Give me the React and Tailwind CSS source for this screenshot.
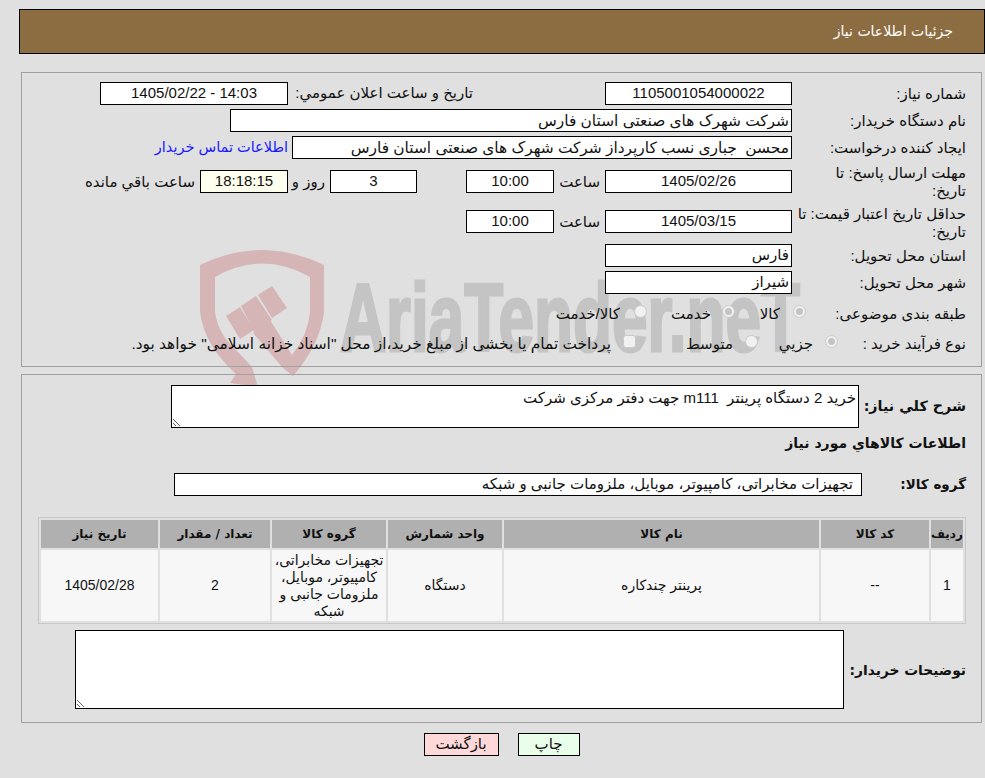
const FONT = "font-['Liberation_Sans','DejaVu_Sans',sans-serif]";

function Box({ className = "", children }) {
  return (
    <div className={`flex h-[23px] shrink-0 items-center border border-black bg-white whitespace-pre ${className}`}>
      {children}
    </div>
  );
}

function Label({ children, className = "w-[174px]" }) {
  return <div className={`shrink-0 leading-[18px] ${className}`}>{children}</div>;
}

function Radio({ checked, square }) {
  return (
    <span className={`-mt-[6px] flex h-[13px] w-[13px] shrink-0 items-center justify-center border border-[#cacaca] bg-[#f1f1f1] ${square ? "rounded-[3px]" : "rounded-full"}`}>
      {checked && <span className="h-[7px] w-[7px] rounded-full bg-[#c4c4c4]" />}
    </span>
  );
}

function Watermark() {
  return (
    <svg dir="ltr" className="pointer-events-none absolute left-[190px] top-[240px]" width="620" height="146" viewBox="190 240 620 146">
      <path
        d="M200 265 Q262 235 324 265 L324 312 Q320 345 293 376 L283 368 L253 333 L270 320 L292 355 Q308 335 310 312 L310 277 Q262 250 215 277 L215 312 Q218 335 238 352 L252 367 L258 387 L230 383 L236 374 Q204 345 200 312 Z"
        fill="#d6b5b7"
      />
      <path
        d="M226 316 L240 307 L254 330 L240 339 Z M241 306 L256 296 L272 320 L255 333 Z M258 295 L272 286 L287 308 L272 318 Z"
        fill="#d6b5b7"
      />
      <text
        x="340"
        y="351"
        direction="ltr"
        fontFamily="'Liberation Sans', sans-serif"
        fontWeight="700"
        fontSize="97"
        fill="#c4c4c4"
        stroke="#c4c4c4"
        strokeWidth="3"
        textLength="460"
        lengthAdjust="spacingAndGlyphs"
      >
        AriaTender.neT
      </text>
    </svg>
  );
}

export default function App() {
  return (
    <div dir="rtl" className={`${FONT} relative min-h-[778px] overflow-hidden bg-[#e0e0e0] pt-[9px] text-[15px] text-[#111]`}>
      <Watermark />

      <div className="ml-[19px] flex h-[45px] items-center border border-black bg-[#8c6d42] pr-[31px] text-[14px] text-white">
        <span className="font-['DejaVu_Sans',sans-serif]">جزئیات اطلاعات نیاز</span>
      </div>

      <div className="relative z-10 ml-[21px] mr-[3px] mt-[18px] flex h-[295px] flex-col border border-[#a0a0a0] pr-[15px] pt-[9px]">
        <div className="flex items-center">
          <Label>شماره نیاز:</Label>
          <Box className="w-[187px] justify-center">1105001054000022</Box>
          <div className="mr-[132px] w-[185px] shrink-0">تاریخ و ساعت اعلان عمومي:</div>
          <Box className="w-[188px] justify-center">14:03 - 1405/02/22</Box>
        </div>
        <div className="mt-[4px] flex items-center">
          <Label>نام دستگاه خریدار:</Label>
          <Box className="w-[562px] pr-[2px] text-[15.4px]">شرکت شهرک های صنعتی استان فارس</Box>
        </div>
        <div className="mt-[4px] flex items-center">
          <Label>ایجاد کننده درخواست:</Label>
          <Box className="w-[500px] pr-[2px] text-[15.4px]">محسن  جباری نسب کارپرداز شرکت شهرک های صنعتی استان فارس</Box>
          <a className="mr-[4px] text-[14.5px] text-[#1a1aff]">اطلاعات تماس خریدار</a>
        </div>
        <div className="mt-[2px] flex h-[45px] items-start">
          <Label className="w-[174px] pt-[3px]">
            مهلت ارسال پاسخ: تا
            <br />
            تاریخ:
          </Label>
          <Box className="mt-[9px] w-[187px] justify-center">1405/02/26</Box>
          <div className="mr-[5px] mt-[9px] w-[46px] shrink-0 leading-[23px]">ساعت</div>
          <Box className="mt-[9px] w-[88px] justify-center">10:00</Box>
          <div className="w-[49px]" />
          <Box className="mt-[9px] w-[87px] justify-center">3</Box>
          <div className="mr-[5px] mt-[9px] w-[37px] shrink-0 leading-[23px]">روز و</div>
          <Box className="mt-[9px] w-[88px] justify-center !bg-[#ffffee]">18:18:15</Box>
          <div className="mr-[5px] mt-[9px] leading-[23px]">ساعت باقي مانده</div>
        </div>
        <div className="mt-[-4px] flex h-[38px] items-start">
          <Label className="w-[174px] pt-[3px]">
            حداقل تاریخ اعتبار قیمت: تا
            <br />
            تاریخ:
          </Label>
          <Box className="mt-[8px] w-[187px] justify-center">1405/03/15</Box>
          <div className="mr-[5px] mt-[8px] w-[46px] shrink-0 leading-[23px]">ساعت</div>
          <Box className="mt-[8px] w-[88px] justify-center">10:00</Box>
        </div>
        <div className="mt-[4px] flex items-center">
          <Label>استان محل تحویل:</Label>
          <Box className="w-[187px] pr-[2px]">فارس</Box>
        </div>
        <div className="mt-[4px] flex items-center">
          <Label>شهر محل تحویل:</Label>
          <Box className="w-[187px] pr-[2px]">شیراز</Box>
        </div>
        <div className="mt-[9px] flex h-[22px] items-center">
          <Label className="w-[160px]">طبقه بندی موضوعی:</Label>
          <Radio checked />
          <span className="mr-[13px] w-[45px] shrink-0">کالا</span>
          <Radio checked />
          <span className="mr-[11px] w-[64px] shrink-0">خدمت</span>
          <Radio />
          <span className="mr-[14px]">کالا/خدمت</span>
        </div>
        <div className="mt-[8px] flex h-[22px] items-center">
          <Label className="w-[128px]">نوع فرآیند خرید :</Label>
          <Radio checked />
          <span className="mr-[12px] w-[55px] shrink-0">جزيي</span>
          <Radio />
          <span className="mr-[12px] w-[97px] shrink-0">متوسط</span>
          <Radio square />
          <span className="mr-[12px] whitespace-nowrap text-[15.4px]">پرداخت تمام يا بخشی از مبلغ خرید،از محل "اسناد خزانه اسلامی" خواهد بود.</span>
        </div>
      </div>

      <div className="relative z-10 ml-[21px] mr-[3px] mt-[7px] h-[349px] border border-[#a0a0a0] pr-[15px] pt-[10px]">
        <div className="flex items-center">
          <div className="mt-[1px] w-[107px] shrink-0 text-[14.3px] font-bold font-['DejaVu_Sans',sans-serif]">شرح كلي نياز:</div>
          <textarea
            readOnly
            className="h-[43px] w-[688px] border border-black bg-white px-[2px] pt-[3px] leading-[18px] outline-none"
            defaultValue="خرید 2 دستگاه پرینتر  m111 جهت دفتر مرکزی شرکت"
          />
        </div>
        <div className="mt-[6px] text-[14px] font-bold leading-[18px] font-['DejaVu_Sans',sans-serif]">اطلاعات کالاهاي مورد نياز</div>
        <div className="mt-[21px] flex items-center">
          <div className="w-[104px] shrink-0 text-[13.5px] font-bold font-['DejaVu_Sans',sans-serif]">گروه کالا:</div>
          <Box className="w-[688px] pr-[8px]">تجهیزات مخابراتی، کامپیوتر، موبایل، ملزومات جانبی و شبکه</Box>
        </div>
        <table className="mt-[21px] w-[928px] table-fixed border-separate border-spacing-[2px] border border-[#c8c8c8] text-[14px]">
          <colgroup>
            <col className="w-[32px]" />
            <col className="w-[108px]" />
            <col className="w-[315px]" />
            <col className="w-[114px]" />
            <col className="w-[114px]" />
            <col className="w-[110px]" />
            <col className="w-[117px]" />
          </colgroup>
          <thead>
            <tr className="h-[28px] bg-[#b0b0b0] text-[12px] font-bold font-['DejaVu_Sans',sans-serif]">
              <th className="whitespace-nowrap">ردیف</th>
              <th>کد کالا</th>
              <th>نام کالا</th>
              <th>واحد شمارش</th>
              <th>گروه کالا</th>
              <th>تعداد / مقدار</th>
              <th>تاریخ نیاز</th>
            </tr>
          </thead>
          <tbody>
            <tr className="h-[71px] bg-[#f7f7f7] text-center">
              <td>1</td>
              <td>--</td>
              <td>پرینتر چندکاره</td>
              <td>دستگاه</td>
              <td className="px-[2px] leading-[17px]">تجهیزات مخابراتی، کامپیوتر، موبایل، ملزومات جانبی و شبکه</td>
              <td>2</td>
              <td>1405/02/28</td>
            </tr>
          </tbody>
        </table>
        <div className="mt-[6px] flex items-center">
          <div className="mt-[2px] w-[122px] shrink-0 text-[13.8px] font-bold font-['DejaVu_Sans',sans-serif]">توضیحات خریدار:</div>
          <textarea readOnly className="h-[79px] w-[769px] border border-black bg-white outline-none" />
        </div>
      </div>

      <div className="relative z-10 mt-[10px] flex justify-center pl-[18px]">
        <div className="flex h-[23px] w-[62px] items-center justify-center border border-black bg-[#eaffea]">چاپ</div>
        <div className="mr-[19px] flex h-[23px] w-[75px] items-center justify-center border border-black bg-[#ffd9d9]">بازگشت</div>
      </div>
    </div>
  );
}
